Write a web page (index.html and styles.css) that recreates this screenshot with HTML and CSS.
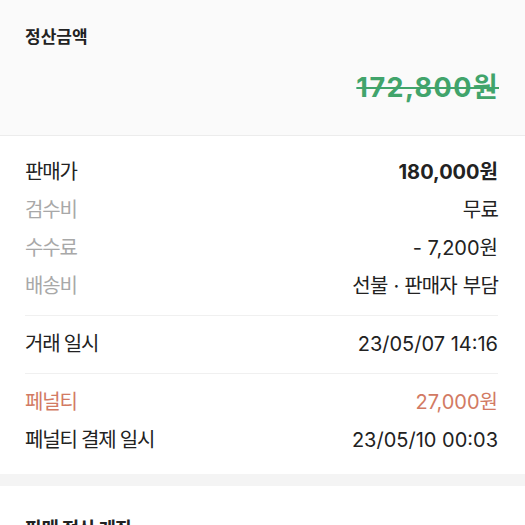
FILE: index.html
```html
<!DOCTYPE html>
<html lang="ko">
<head>
<meta charset="utf-8">
<link rel="stylesheet" href="styles.css">
</head>
<body>
<section class="summary">
  <h2 class="summary-title">정산금액</h2>
  <div class="summary-amount"><s>172,800원</s></div>
</section>
<section class="details">
  <div class="group">
    <div class="row"><span class="label">판매가</span><span class="value bold">180,000원</span></div>
    <div class="row"><span class="label muted">검수비</span><span class="value ko">무료</span></div>
    <div class="row"><span class="label muted">수수료</span><span class="value">- 7,200원</span></div>
    <div class="row"><span class="label muted">배송비</span><span class="value ko">선불 · 판매자 부담</span></div>
  </div>
  <div class="group">
    <div class="row"><span class="label">거래 일시</span><span class="value">23/05/07 14:16</span></div>
  </div>
  <div class="group">
    <div class="row penalty"><span class="label">페널티</span><span class="value">27,000원</span></div>
    <div class="row"><span class="label">페널티 결제 일시</span><span class="value">23/05/10 00:03</span></div>
  </div>
</section>
<div class="band"></div>
<section class="account">
  <h2 class="account-title">판매 정산 계좌</h2>
</section>
</body>
</html>
```
FILE: styles.css
```css
* { box-sizing: border-box; }
html, body { margin: 0; padding: 0; }
body {
  font-family: Inter, "Noto Sans CJK KR", "Noto Sans", sans-serif;
  color: #222;
  background: #fff;
  width: 525px;
  overflow: hidden;
}
.summary {
  background: #fafafa;
  height: 136px;
  padding: 25px 27px 0 25px;
  border-bottom: 1px solid #ececec;
}
.summary-title {
  margin: 0;
  font-size: 17px;
  font-weight: 600;
  line-height: 24px;
  color: #222;
}
.summary-amount {
  margin-top: 22px;
  text-align: right;
  font-size: 27px;
  font-weight: 700;
  line-height: 34px;
  letter-spacing: 1.4px;
  margin-right: -1px;
  color: #41a46b;
}
.summary-amount s {
  text-decoration-thickness: 2px;
}
.details {
  padding: 17px 27px 15px 25px;
}
.group + .group {
  border-top: 1px solid #f0f0f0;
  margin-top: 10px;
  padding-top: 9px;
}
.row {
  display: flex;
  justify-content: space-between;
  align-items: center;
  height: 38px;
  font-size: 20px;
  line-height: 24px;
}
.label { color: #222; letter-spacing: -1.2px; }
.muted { color: #a8a8a8; }
.value { color: #222; }
.value.ko { letter-spacing: -0.8px; word-spacing: 1px; }
.bold { font-weight: 700; }
.penalty .label, .penalty .value { color: #d27a63; }
.band {
  height: 12px;
  background: #f4f4f4;
}
.account {
  padding: 32px 25px 0;
}
.account-title {
  margin: 0;
  font-size: 19px;
  font-weight: 600;
  line-height: 24px;
  letter-spacing: -1px;
}
```
